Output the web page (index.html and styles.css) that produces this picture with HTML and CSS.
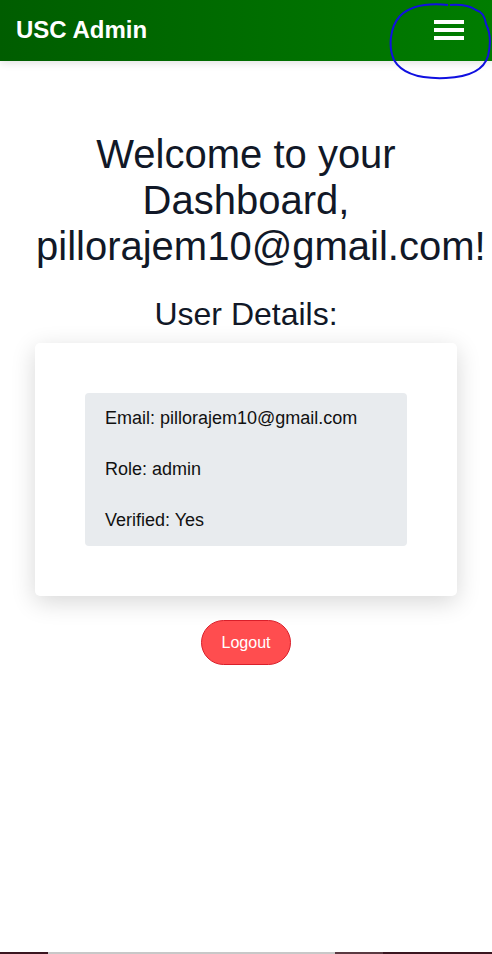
FILE: index.html
```html
<!DOCTYPE html>
<html>
<head>
<meta charset="utf-8">
<link rel="stylesheet" href="styles.css">
</head>
<body>
<header class="topbar">
  <div class="brand">USC Admin</div>
  <button class="menu" aria-label="Menu">
    <span class="bar"></span><span class="bar"></span><span class="bar"></span>
  </button>
  <svg class="scribble" width="104" height="82" viewBox="0 0 104 82">
    <path d="M60 5 C40 3 22 6 12 16 C2 27 0 46 6 60 C14 74 34 79 58 78 C80 77 96 70 100 56 C103 44 102 32 98 24 C97 17 95 12 88 10 C82 6 75 4 62 5" fill="none" stroke="#1010e0" stroke-width="2"/>
  </svg>
</header>
<main class="content">
  <h1 class="welcome">Welcome to your Dashboard, pillorajem10@gmail.com!</h1>
  <h2 class="subtitle">User Details:</h2>
  <section class="card">
    <div class="details">
      <p class="row">Email: pillorajem10@gmail.com</p>
      <p class="row">Role: admin</p>
      <p class="row">Verified: Yes</p>
    </div>
  </section>
  <button class="logout">Logout</button>
</main>
<div class="taskbar">
  <span class="seg dark s1"></span><span class="seg light s2"></span><span class="seg mid s3"></span><span class="seg dark s4"></span>
</div>
</body>
</html>
```
FILE: styles.css
```css
* { box-sizing: border-box; }
html, body { margin: 0; padding: 0; background: #fff; }
body {
  font-family: "Liberation Sans", Arial, sans-serif;
  color: #111;
  min-height: 954px;
}
.topbar {
  position: relative;
  height: 61px;
  display: flex;
  align-items: center;
  justify-content: space-between;
  padding: 0 28px 0 16px;
  background: linear-gradient(to right, #005d00, #007d00);
  box-shadow: 0 2px 8px rgba(0,0,0,0.12);
}
.brand {
  color: #fff;
  font-weight: bold;
  font-size: 24px;
  margin-top: -2px;
}
.menu {
  display: flex;
  flex-direction: column;
  gap: 4px;
  padding: 0;
  border: 0;
  background: none;
  margin-top: -2px;
}
.bar {
  display: block;
  width: 30px;
  height: 4px;
  background: #fff;
}
.scribble {
  position: absolute;
  left: 388px;
  top: 0;
}
.content {
  display: flex;
  flex-direction: column;
  align-items: center;
  padding-top: 70px;
}
.welcome {
  font-weight: normal;
  font-size: 40px;
  line-height: 46px;
  text-align: center;
  margin: 0 36px;
  width: 420px;
  color: #111827;
}
.subtitle {
  font-weight: normal;
  font-size: 32px;
  line-height: 37px;
  margin: 27px 0 10px;
  color: #111827;
}
.card {
  width: 422px;
  background: #fff;
  border-radius: 5px;
  padding: 50px;
  box-shadow: 0 6px 24px rgba(0,0,0,0.16);
}
.details {
  background: #e8ebee;
  border-radius: 4px;
  padding: 0 20px;
}
.row {
  margin: 0;
  height: 51px;
  display: flex;
  align-items: center;
  font-size: 18px;
  color: #111;
}
.logout {
  margin-top: 24px;
  width: 90px;
  height: 45px;
  border-radius: 23px;
  background: #ff4d4f;
  border: 1px solid #d91f2a;
  color: #fff;
  font-family: "Liberation Sans", Arial, sans-serif;
  font-size: 16px;
}
.taskbar {
  position: fixed;
  left: 0;
  bottom: 0;
  width: 100%;
  height: 2px;
  display: flex;
}
.seg { display: block; height: 2px; }
.dark { background: #3a1620; }
.light { background: #c8c8c8; }
.mid { background: #5a3a42; }
.s1 { width: 48px; }
.s2 { width: 287px; }
.s3 { width: 48px; }
.s4 { flex: 1; }
```
